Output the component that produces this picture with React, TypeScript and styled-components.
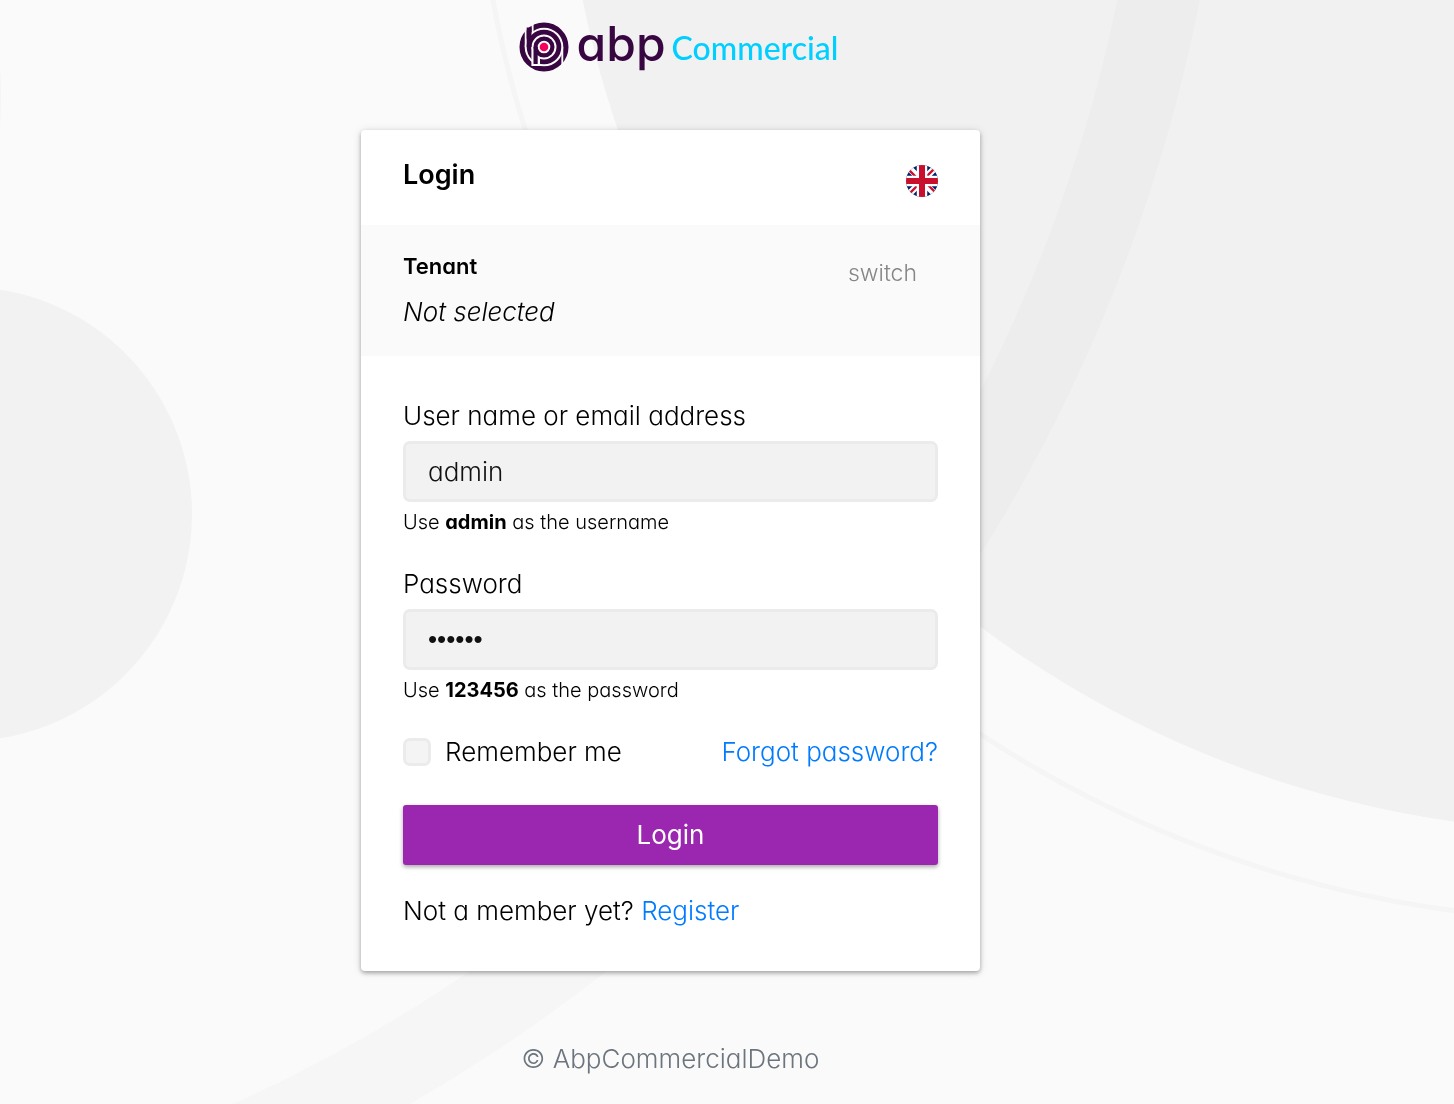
import React, { useState } from 'react';
import styled, { createGlobalStyle } from 'styled-components';

const GlobalStyle = createGlobalStyle`
  *, *::before, *::after { box-sizing: border-box; }
  body {
    margin: 0;
    background: #fafafa;
    color: #000;
    font: 300 26px/36px Inter, "Open Sans", sans-serif;
    font-feature-settings: "cv11", "ss03";
  }
`;

const Backdrop = styled.svg`
  position: fixed;
  inset: 0;
  z-index: -1;
  width: 100%;
  height: 100%;
`;

const Page = styled.main`
  display: grid;
  grid-template-columns: minmax(0, 361fr) minmax(0, 619px) minmax(0, 474fr);
`;

const Column = styled.div`
  grid-column: 2;
  display: flex;
  flex-direction: column;
`;

const Brand = styled.a`
  display: flex;
  align-items: flex-start;
  align-self: center;
  height: 50px;
  margin: 22px 0 58px 16px;
  color: #380640;
  text-decoration: none;
`;

const BrandMark = styled.svg`
  flex: none;
  width: 50px;
  height: 50px;
`;

const BrandName = styled.span`
  margin-left: 8px;
  font-size: 48px;
  line-height: 44px;
  font-weight: 500;
`;

const BrandEdition = styled.span`
  margin-left: 6px;
  color: #00cfff;
  font: 500 32px/52px Lato, "Open Sans", sans-serif;
`;

const Card = styled.section`
  background: #fff;
  border-radius: 4px;
  box-shadow: 0 2px 4px rgba(0, 0, 0, 0.3), 0 1px 10px rgba(0, 0, 0, 0.12);
`;

const CardHeader = styled.header`
  display: flex;
  justify-content: space-between;
  align-items: flex-end;
  padding: 28px 42px;
`;

const Title = styled.h1`
  margin: 0;
  padding-bottom: 5px;
  font-size: 27px;
  line-height: 34px;
  font-weight: 600;
`;

const LanguageButton = styled.button`
  width: 32px;
  height: 32px;
  padding: 0;
  border: 0;
  border-radius: 50%;
  background: none;
  overflow: hidden;
  cursor: pointer;

  svg { display: block; }
`;

const TenantBar = styled.div`
  display: flex;
  justify-content: space-between;
  align-items: flex-start;
  padding: 28px 42px 26px;
  background: #fafafa;
`;

const TenantLabel = styled.h2`
  margin: 0 0 15px;
  font-size: 22px;
  line-height: 26px;
  font-weight: 600;
`;

const TenantName = styled.p`
  margin: 0;
  font-style: italic;
`;

const SwitchButton = styled.button`
  padding: 0 21px;
  border: 0;
  background: none;
  color: #868686;
  font: inherit;
  font-size: 23px;
  line-height: 40px;
  cursor: pointer;
`;

const Form = styled.form`
  display: flex;
  flex-direction: column;
  padding: 42px;
`;

const Field = styled.div`
  display: flex;
  flex-direction: column;
  margin-bottom: 29px;
`;

const FieldLabel = styled.label`
  margin-bottom: 7px;
`;

const TextInput = styled.input`
  width: 100%;
  height: 61px;
  padding: 0 22px;
  border: 3px solid #ebebeb;
  border-radius: 7px;
  background: #f2f2f2;
  color: #111;
  font: inherit;
  font-feature-settings: "cv11";
  outline: none;

  &[type="password"] { font-family: "Liberation Sans", sans-serif; }
`;

const Hint = styled.small`
  margin-top: 5px;
  font-size: 20px;
  line-height: 30px;

  strong { font-weight: 700; }
`;

const OptionsRow = styled.div`
  display: flex;
  justify-content: space-between;
  margin-bottom: 35px;
`;

const CheckLabel = styled.label`
  display: flex;
  align-items: center;
  gap: 14px;
`;

const Checkbox = styled.input`
  appearance: none;
  width: 28px;
  height: 28px;
  margin: 0;
  border: 3px solid #ebebeb;
  border-radius: 7px;
  background: #f4f4f4;

  &:checked { background: #9b26b0; }
`;

const Link = styled.a`
  color: #007bff;
  text-decoration: none;
`;

const SubmitButton = styled.button`
  height: 60px;
  margin-bottom: 28px;
  border: 0;
  border-radius: 3px;
  background: #9b26b0;
  box-shadow: 0 2px 4px rgba(0, 0, 0, 0.35);
  color: #fff;
  font: inherit;
  font-weight: 400;
  cursor: pointer;
`;

const Register = styled.p`
  margin: 0;
`;

const Footer = styled.footer`
  padding: 70px 0 27px;
  text-align: center;
  color: #6c757d;
`;

function Background() {
  return (
    <Backdrop viewBox="0 0 1454 1104" preserveAspectRatio="xMidYMid slice" aria-hidden="true">
      <circle cx="1600" cy="-206" r="1038" fill="#f1f1f1" />
      <circle cx="1600" cy="-206" r="1126" fill="none" stroke="#f5f5f5" strokeWidth="5" />
      <circle cx="-407" cy="-315" r="1597" fill="none" stroke="#000" strokeOpacity="0.016" strokeWidth="81" />
      <circle cx="-35" cy="514" r="227" fill="#f2f2f2" />
      <circle cx="-544" cy="98" r="545" fill="#f5f5f5" />
    </Backdrop>
  );
}

function Mark() {
  return (
    <BrandMark viewBox="-25 -25 50 50" aria-hidden="true">
      <circle r="21.9" fill="none" stroke="#380640" strokeWidth="5.2" />
      <path d="M-18.3-25V0M-11.4-25V-10M18.3 25V0" stroke="#fafafa" strokeWidth="1.9" />
      <circle r="14.9" fill="none" stroke="#380640" strokeWidth="4.8" />
      <path d="M-14.9-19.5V0" stroke="#380640" strokeWidth="4.8" />
      <path d="M-8.3 0V19" stroke="#fafafa" strokeWidth="8.6" />
      <circle r="8.4" fill="none" stroke="#380640" strokeWidth="4.2" />
      <path d="M-8.4 0V17" stroke="#380640" strokeWidth="4.2" />
      <circle r="4.3" fill="#f5005a" />
    </BrandMark>
  );
}

function BritishFlag() {
  return (
    <svg width="32" height="32" viewBox="0 0 32 32" aria-hidden="true">
      <path fill="#012169" d="M0 0h32v32H0z" />
      <path stroke="#fff" strokeWidth="6.5" d="M0 0l32 32M32 0L0 32" />
      <path stroke="#c8102e" strokeWidth="2.4" d="M-1 1l17 17M33 -1L16 16M33 31L16 14M-1 33L16 16" />
      <path stroke="#fff" strokeWidth="10.5" d="M16 0v32M0 16h32" />
      <path stroke="#c8102e" strokeWidth="6" d="M16 0v32M0 16h32" />
    </svg>
  );
}

export default function App() {
  const [user, setUser] = useState('admin');
  const [password, setPassword] = useState('123456');

  return (
    <>
      <GlobalStyle />
      <Background />
      <Page>
        <Column>
          <Brand href="#">
            <Mark />
            <BrandName>abp</BrandName>
            <BrandEdition>Commercial</BrandEdition>
          </Brand>
          <Card>
            <CardHeader>
              <Title>Login</Title>
              <LanguageButton type="button" aria-label="Language: English">
                <BritishFlag />
              </LanguageButton>
            </CardHeader>
            <TenantBar>
              <div>
                <TenantLabel>Tenant</TenantLabel>
                <TenantName>Not selected</TenantName>
              </div>
              <SwitchButton type="button">switch</SwitchButton>
            </TenantBar>
            <Form onSubmit={(event) => event.preventDefault()}>
              <Field>
                <FieldLabel htmlFor="user">User name or email address</FieldLabel>
                <TextInput id="user" value={user} onChange={(e) => setUser(e.target.value)} />
                <Hint>Use <strong>admin</strong> as the username</Hint>
              </Field>
              <Field>
                <FieldLabel htmlFor="password">Password</FieldLabel>
                <TextInput
                  id="password"
                  type="password"
                  value={password}
                  onChange={(e) => setPassword(e.target.value)}
                />
                <Hint>Use <strong>123456</strong> as the password</Hint>
              </Field>
              <OptionsRow>
                <CheckLabel>
                  <Checkbox type="checkbox" />
                  Remember me
                </CheckLabel>
                <Link href="#forgot">Forgot password?</Link>
              </OptionsRow>
              <SubmitButton type="submit">Login</SubmitButton>
              <Register>
                Not a member yet? <Link href="#register">Register</Link>
              </Register>
            </Form>
          </Card>
          <Footer>© AbpCommercialDemo</Footer>
        </Column>
      </Page>
    </>
  );
}
